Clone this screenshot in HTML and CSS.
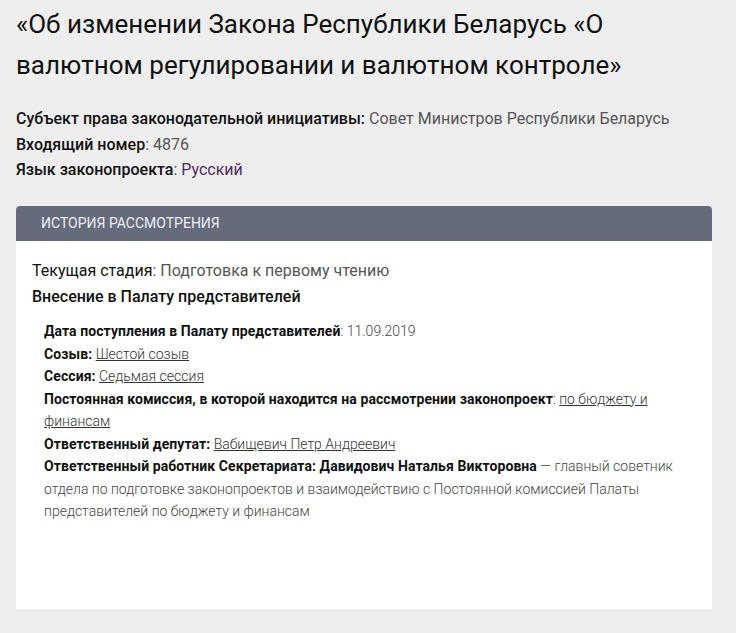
FILE: index.html
```html
<!DOCTYPE html>
<html lang="ru">
<head>
    <meta charset="UTF-8">
    <meta name="viewport" content="width=device-width, initial-scale=1.0">
    <title>Законопроект 4876</title>
    <link rel="stylesheet" href="styles.css">
</head>
<body>
    <div class="page">
        <h1 class="bill-title">«Об изменении Закона Республики Беларусь «О валютном регулировании и валютном контроле»</h1>

        <div class="bill-meta">
            <p><b>Субъект права законодательной инициативы:</b> Совет Министров Республики Беларусь</p>
            <p><b>Входящий номер</b>: 4876</p>
            <p><b>Язык законопроекта</b>: <span class="lang">Русский</span></p>
        </div>

        <div class="history">
            <div class="history-head">История рассмотрения</div>
            <div class="history-body">
                <p class="stage"><span class="label">Текущая стадия</span>: Подготовка к первому чтению</p>
                <h2 class="step">Внесение в Палату представителей</h2>

                <ul class="details">
                    <li><b>Дата поступления в Палату представителей</b>: 11.09.2019</li>
                    <li><b>Созыв:</b> <a href="#">Шестой созыв</a></li>
                    <li><b>Сессия:</b> <a href="#">Седьмая сессия</a></li>
                    <li><b>Постоянная комиссия, в которой находится на рассмотрении законопроект</b>: <a href="#">по бюджету и финансам</a></li>
                    <li><b>Ответственный депутат:</b> <a href="#">Вабищевич Петр Андреевич</a></li>
                    <li><b>Ответственный работник Секретариата: Давидович Наталья Викторовна</b> — главный советник отдела по подготовке законопроектов и взаимодействию с Постоянной комиссией Палаты представителей по бюджету и финансам</li>
                </ul>
            </div>
        </div>
    </div>
</body>
</html>
```
FILE: styles.css
```css
* {
    margin: 0;
    padding: 0;
    box-sizing: border-box;
}

body {
    font-family: Roboto, "Noto Sans", sans-serif;
    background: #eeeeee;
    color: #222;
}

.page {
    padding: 4px 24px 24px 16px;
}

.bill-title {
    font-weight: 400;
    font-size: 26px;
    line-height: 41px;
    color: #111;
    margin-bottom: 20px;
}

.bill-meta {
    font-size: 16px;
    line-height: 25.5px;
    color: #555;
}

.bill-meta b {
    font-weight: 500;
    color: #111;
}

.bill-meta .lang {
    color: #4e2d5c;
}

.history {
    margin-top: 23.5px;
    background: white;
}

.history-head {
    background: #666b7c;
    color: #eceef2;
    font-size: 14px;
    text-transform: uppercase;
    padding: 0 25px;
    height: 35px;
    line-height: 35px;
    border-radius: 4px 4px 0 0;
}

.history-body {
    padding: 16.5px 16px 86px;
}

.stage {
    font-size: 16px;
    line-height: 26px;
    color: #555;
}

.stage .label {
    color: #111;
}

.step {
    font-size: 16px;
    font-weight: 500;
    line-height: 26px;
    color: #111;
    margin-bottom: 10.5px;
}

.details {
    list-style: none;
    padding: 0 12px;
    font-size: 14px;
    font-weight: 300;
    line-height: 22.5px;
    color: #444;
}

.details b {
    font-weight: 700;
    letter-spacing: 0.08px;
    color: #111;
}

.details a {
    color: #333;
}
```
